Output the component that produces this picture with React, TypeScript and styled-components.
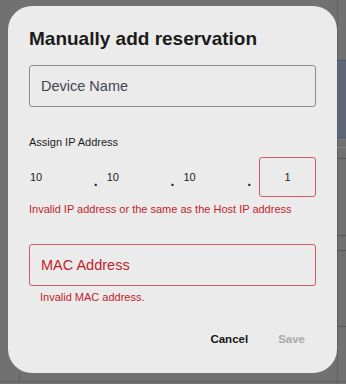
import React from "react";
import styled, { createGlobalStyle } from "styled-components";

const GlobalStyle = createGlobalStyle`
  html, body {
    margin: 0;
    padding: 0;
  }
  body {
    font-family: "Liberation Sans", Arial, sans-serif;
    background: #717171;
  }
`;

// the dimmed page behind the dialog, only a sliver of it shows at the edges
const Page = styled.div`
  width: 346px;
  height: 384px;
  box-sizing: border-box;
  padding: 6px 9px 0 8px;
  background:
    linear-gradient(#3f5b82, #3f5b82) right 0 top 60px / 9px 1px no-repeat,
    linear-gradient(#3f5b82, #3f5b82) right 0 top 137px / 9px 1px no-repeat,
    linear-gradient(#5f6777, #5f6777) right 0 top 61px / 9px 76px no-repeat,
    linear-gradient(#858585, #858585) right 0 top 147px / 9px 1px no-repeat,
    linear-gradient(#565656, #565656) right 0 top 158px / 9px 1px no-repeat,
    linear-gradient(#565656, #565656) right 0 top 235px / 9px 1px no-repeat,
    linear-gradient(#565656, #565656) right 0 top 250px / 9px 1px no-repeat,
    linear-gradient(#565656, #565656) right 0 top 326px / 9px 1px no-repeat,
    linear-gradient(#5e5e5e, #5e5e5e) left 0 top 381px / 100% 1px no-repeat,
    linear-gradient(#5e5e5e, #5e5e5e) left 19px top 373px / 1px 8px no-repeat,
    linear-gradient(#626262, #626262) left 337px top 0 / 1px 100% no-repeat,
    #717171;
`;

const Dialog = styled.div`
  width: 329px;
  height: 367px;
  box-sizing: border-box;
  padding: 21px 21px 0 21px;
  background: #ebebeb;
  border-radius: 24px;
  display: flex;
  flex-direction: column;
`;

const Title = styled.h2`
  margin: 0;
  font-size: 19px;
  line-height: 23px;
  font-weight: 700;
  color: #1b1b1b;
`;

const TextField = styled.div<{ $invalid?: boolean }>`
  height: 42px;
  box-sizing: border-box;
  margin-top: ${(p) => (p.$invalid ? "28px" : "15px")};
  padding: 0 11px;
  display: flex;
  align-items: center;
  border: 1px solid ${(p) => (p.$invalid ? "#d35a62" : "#8d8d8d")};
  border-radius: 3px;
  font-size: 14.5px;
  color: ${(p) => (p.$invalid ? "#c11d2c" : "#434650")};
`;

const Label = styled.div`
  margin-top: 28px;
  font-size: 11px;
  line-height: 14px;
  color: #1d1d1d;
`;

const IpRow = styled.div`
  margin-top: 8px;
  display: grid;
  grid-template-columns: 1fr 20px 1fr 20px 1fr 20px 1fr;
  height: 40px;
`;

const Octet = styled.div<{ $invalid?: boolean }>`
  box-sizing: border-box;
  display: flex;
  align-items: center;
  justify-content: ${(p) => (p.$invalid ? "center" : "flex-start")};
  border: 1px solid ${(p) => (p.$invalid ? "#d35a62" : "transparent")};
  border-radius: 3px;
  font-size: 11px;
  color: #1d1d1d;
`;

const Dot = styled.div`
  display: flex;
  align-items: center;
  justify-content: center;
  padding-top: 7px;
  font-size: 14px;
  font-weight: 700;
  color: #1d1d1d;
`;

const ErrorText = styled.div<{ $indent?: boolean }>`
  margin-top: ${(p) => (p.$indent ? "4px" : "5px")};
  padding-left: ${(p) => (p.$indent ? "11px" : "0")};
  font-size: 11px;
  line-height: 14px;
  color: #c11d2c;
`;

const Actions = styled.div`
  margin-top: 27px;
  display: flex;
  justify-content: flex-end;
  gap: 8px;
`;

const TextButton = styled.button<{ $disabled?: boolean }>`
  border: none;
  background: none;
  padding: 0 11px;
  font-family: "Liberation Sans", Arial, sans-serif;
  font-size: 11.5px;
  line-height: 16px;
  font-weight: 700;
  color: ${(p) => (p.$disabled ? "#a9a9a9" : "#151515")};
  cursor: ${(p) => (p.$disabled ? "default" : "pointer")};
`;

const octets = ["10", "10", "10", "1"];

export default function App() {
  return (
    <>
      <GlobalStyle />
      <Page>
        <Dialog>
          <Title>Manually add reservation</Title>
          <TextField>Device Name</TextField>
          <Label>Assign IP Address</Label>
          <IpRow>
            {octets.map((o, i) => (
              <React.Fragment key={i}>
                {i > 0 && <Dot>.</Dot>}
                <Octet $invalid={i === octets.length - 1}>{o}</Octet>
              </React.Fragment>
            ))}
          </IpRow>
          <ErrorText>Invalid IP address or the same as the Host IP address</ErrorText>
          <TextField $invalid>MAC Address</TextField>
          <ErrorText $indent>Invalid MAC address.</ErrorText>
          <Actions>
            <TextButton>Cancel</TextButton>
            <TextButton $disabled>Save</TextButton>
          </Actions>
        </Dialog>
      </Page>
    </>
  );
}
